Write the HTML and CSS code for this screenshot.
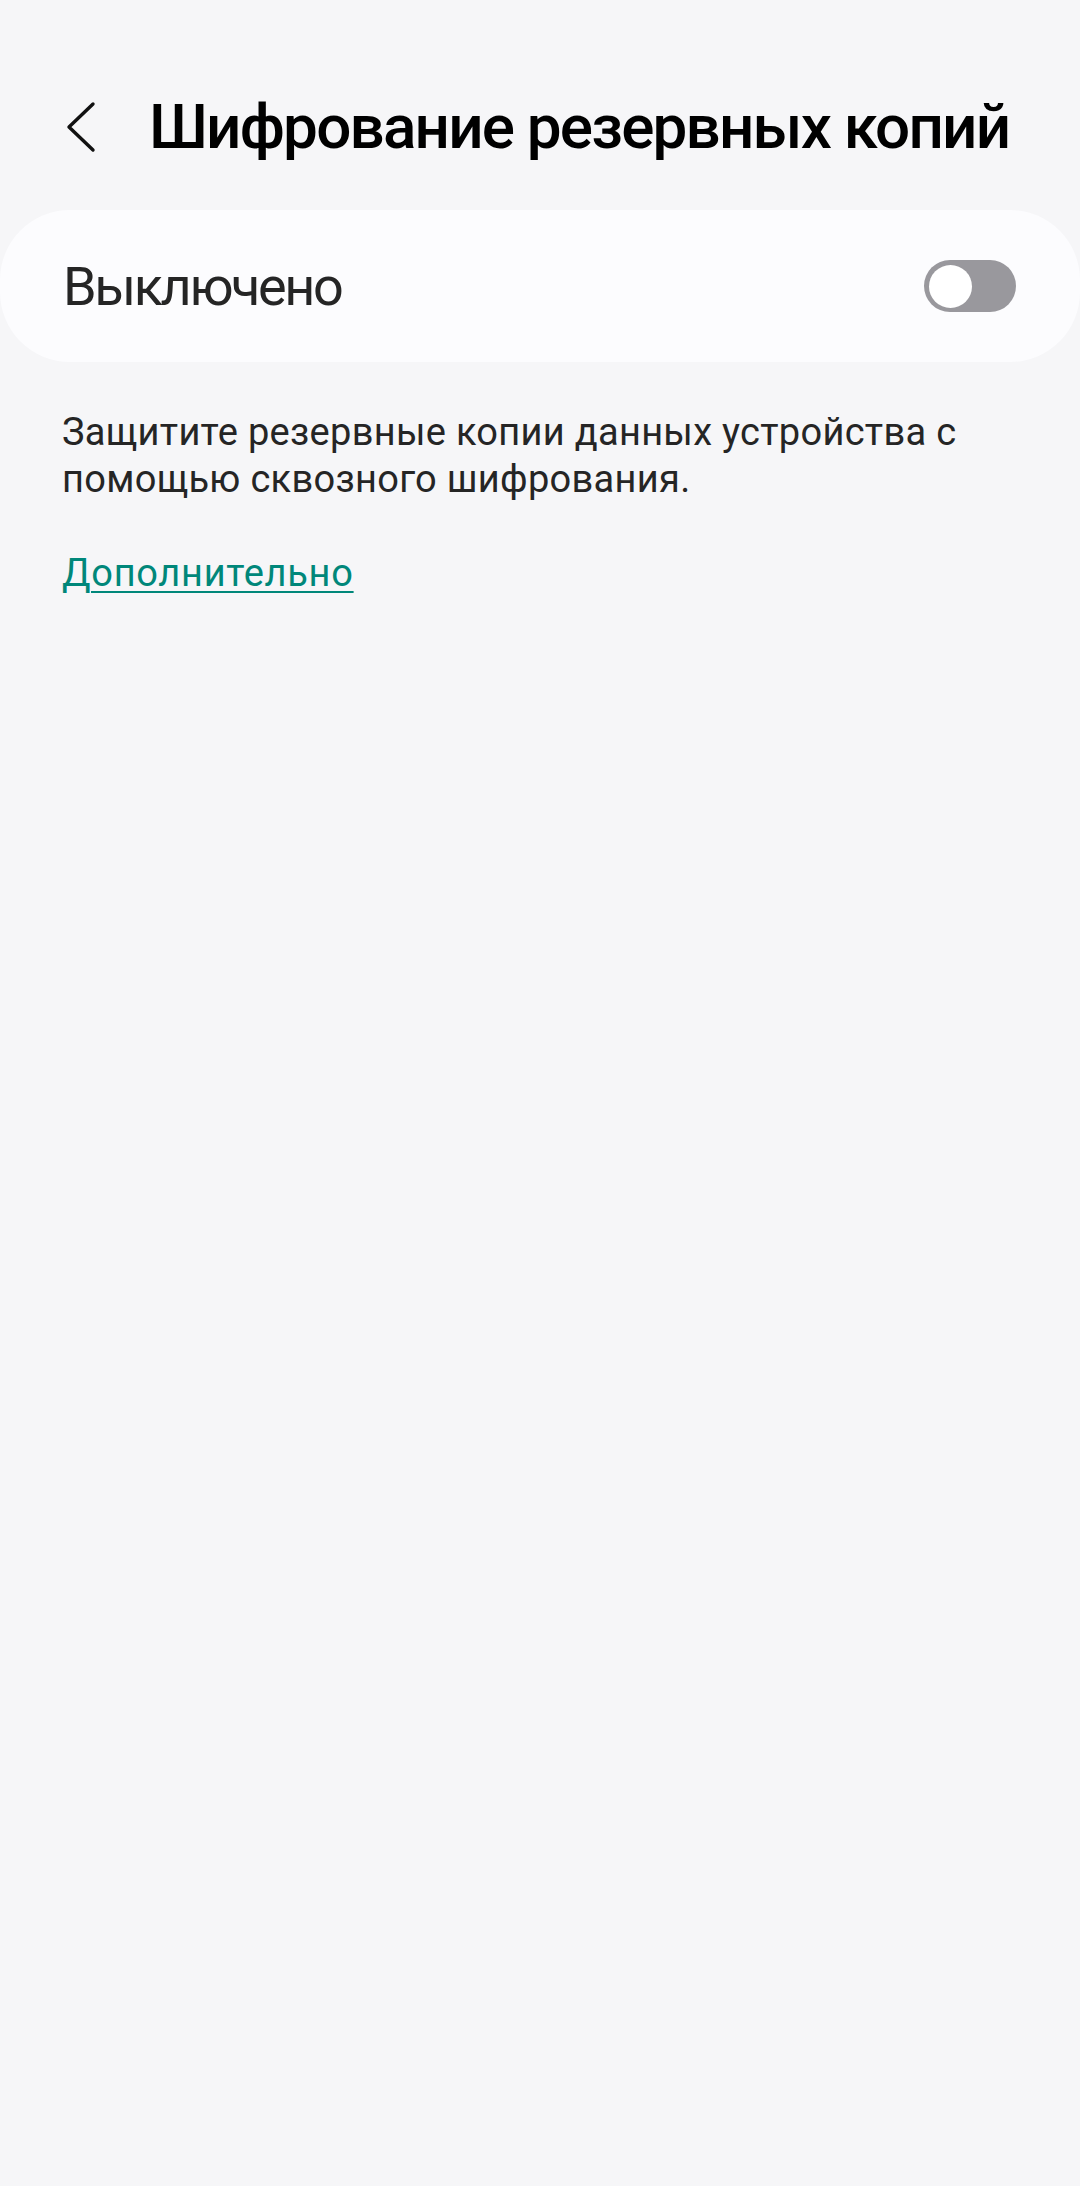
FILE: index.html
```html
<!DOCTYPE html>
<html lang="ru">
<head>
<meta charset="utf-8">
<link rel="stylesheet" href="styles.css">
</head>
<body>
<header class="top-bar">
  <svg class="back" width="30" height="52" viewBox="0 0 30 52" aria-hidden="true">
    <polyline points="27,3 3,26 27,49" fill="none" stroke="#111" stroke-width="3.4" stroke-linecap="round" stroke-linejoin="round"/>
  </svg>
  <h1 class="title">Шифрование резервных копий</h1>
</header>
<section class="switch-card">
  <span class="switch-label">Выключено</span>
  <span class="toggle"><span class="knob"></span></span>
</section>
<p class="desc">Защитите резервные копии данных устройства с помощью сквозного шифрования.</p>
<a class="more" href="#">Дополнительно</a>
</body>
</html>
```
FILE: styles.css
```css
html, body {
  margin: 0;
  padding: 0;
  background: #f6f6f8;
}
body {
  width: 1080px;
  height: 2186px;
  font-family: Roboto, "Noto Sans", sans-serif;
  display: flex;
  flex-direction: column;
  align-items: stretch;
}
.top-bar {
  display: flex;
  align-items: center;
  height: 60px;
  margin-top: 97px;
  padding-left: 66px;
}
.back {
  display: block;
  flex: none;
}
.title {
  margin: 0 0 0 53px;
  font-size: 62px;
  line-height: 60px;
  font-weight: 500;
  letter-spacing: -1.8px;
  color: #000;
  white-space: nowrap;
}
.switch-card {
  margin-top: 53px;
  height: 152px;
  border-radius: 70px;
  background: #fcfcfe;
  display: flex;
  align-items: center;
  justify-content: space-between;
  padding: 0 64px 0 63px;
}
.switch-label {
  font-size: 54px;
  font-weight: 400;
  letter-spacing: -2.4px;
  color: #252525;
}
.toggle {
  width: 92px;
  height: 52px;
  border-radius: 26px;
  background: #99989d;
  display: flex;
  align-items: center;
  padding-left: 5px;
  box-sizing: border-box;
}
.knob {
  width: 43px;
  height: 43px;
  border-radius: 50%;
  background: #fff;
}
.desc {
  margin: 47px 0 0 0;
  padding: 0 60px 0 62px;
  font-size: 38px;
  line-height: 47px;
  letter-spacing: 0.3px;
  color: #252525;
}
.more {
  margin: 47px 0 0 62px;
  align-self: flex-start;
  font-size: 38px;
  line-height: 47px;
  letter-spacing: 0.7px;
  color: #00877a;
  text-decoration: underline;
  text-decoration-thickness: 2px;
  text-underline-offset: 5px;
}
```
